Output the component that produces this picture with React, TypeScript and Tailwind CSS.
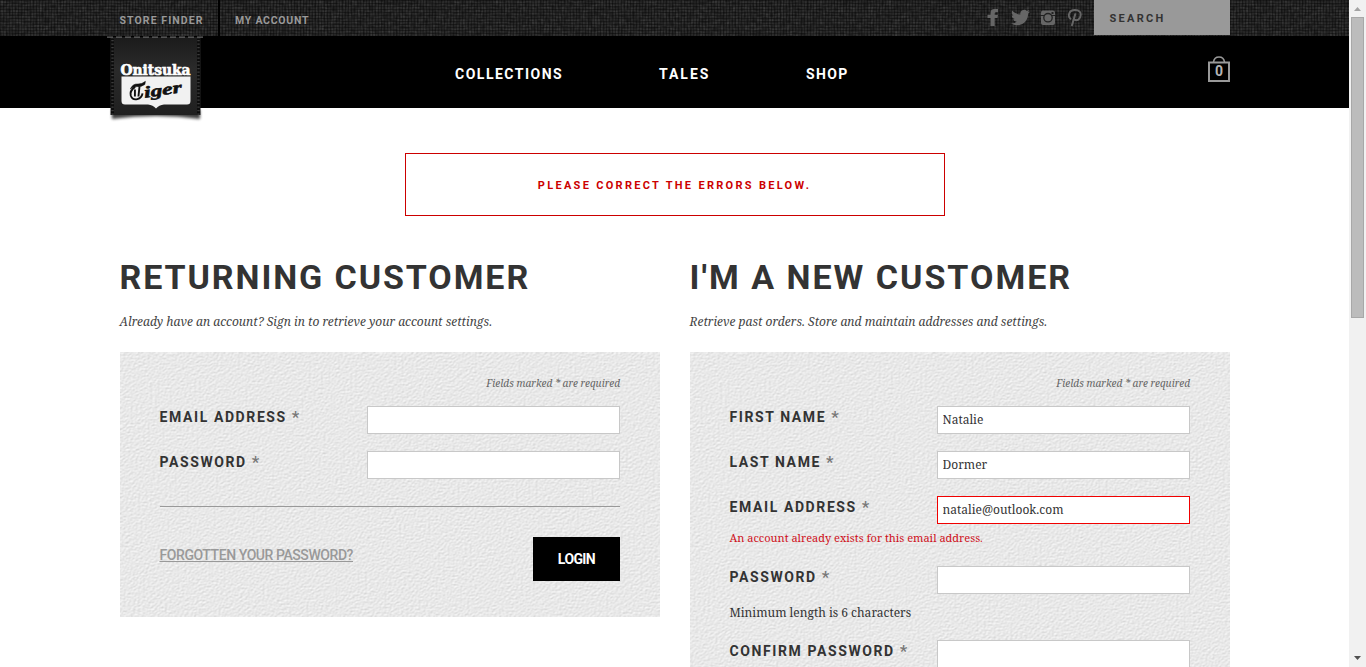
import type { ReactNode } from "react";

function Weave() {
  return (
    <svg className="absolute inset-0 h-full w-full" aria-hidden="true">
      <filter id="warp" x="0" y="0" width="100%" height="100%" colorInterpolationFilters="sRGB">
        <feTurbulence type="fractalNoise" baseFrequency="0.16 0.55" numOctaves="1" seed="3" />
        <feColorMatrix values="0 0 0 0 1  0 0 0 0 1  0 0 0 0 1  0.2 0 0 0 -0.08" />
      </filter>
      <filter id="weft" x="0" y="0" width="100%" height="100%" colorInterpolationFilters="sRGB">
        <feTurbulence type="fractalNoise" baseFrequency="0.55 0.16" numOctaves="1" seed="8" />
        <feColorMatrix values="0 0 0 0 1  0 0 0 0 1  0 0 0 0 1  0.2 0 0 0 -0.08" />
      </filter>
      <pattern id="threads" width="3" height="3" patternUnits="userSpaceOnUse">
        <path d="M0 0.5H3M0.5 0V3" stroke="#000" strokeOpacity="0.3" />
      </pattern>
      <rect width="100%" height="100%" fill="#1f1f1f" />
      <rect width="100%" height="100%" filter="url(#warp)" />
      <rect width="100%" height="100%" filter="url(#weft)" />
      <rect width="100%" height="100%" fill="url(#threads)" />
    </svg>
  );
}

function Paper() {
  return (
    <svg className="absolute inset-0 h-full w-full" aria-hidden="true">
      <filter id="paper" x="0" y="0" width="100%" height="100%" colorInterpolationFilters="sRGB">
        <feTurbulence type="fractalNoise" baseFrequency="0.41 0.57" numOctaves="2" seed="5" />
        <feDiffuseLighting surfaceScale="0.26" diffuseConstant="1.075" lightingColor="#ffffff">
          <feDistantLight azimuth="235" elevation="58" />
        </feDiffuseLighting>
      </filter>
      <rect width="100%" height="100%" fill="#e6e6e6" filter="url(#paper)" />
    </svg>
  );
}

function Logo() {
  return (
    <svg width="100" height="90" viewBox="0 0 100 90" className="block">
      <defs>
        <linearGradient id="patch" x1="0" y1="0" x2="0" y2="1">
          <stop offset="0" stopColor="#1b1b1b" />
          <stop offset="0.4" stopColor="#2a2a2a" />
          <stop offset="1" stopColor="#202020" />
        </linearGradient>
        <filter id="soft" x="-10%" y="-50%" width="120%" height="200%">
          <feGaussianBlur stdDeviation="1.5" />
        </filter>
      </defs>
      <path d="M7 74H95V83Q51 77 7 83Z" fill="#000" opacity="0.75" filter="url(#soft)" />
      <path d="M5.500 1H95.500V79H5.500Z" fill="url(#patch)" />
      <path d="M7.500 3V79M93.500 3V79" stroke="#0c0c0c" strokeWidth="3" />
      <path d="M7.500 4V79M93.500 4V79" stroke="#3c3c3c" strokeWidth="2.400" strokeDasharray="1.300 2.200" />
      <path d="M2 1.200H99" stroke="#666" strokeWidth="1.200" strokeDasharray="6 3" />
      <path
        d="M16.500 40.500H85.500V65Q85.500 68.500 82 68.500H59Q54 69 51 72.500Q48 69 43 68.500H20Q16.500 68.500 16.500 65Z"
        fill="#f1f1f1"
      />
      <text
        x="15.500"
        y="38.700"
        fill="#fff"
        stroke="#fff"
        strokeWidth="0.6"
        textLength="70"
        lengthAdjust="spacingAndGlyphs"
        className="text-[14px] font-bold [font-family:'DejaVu_Serif',serif]"
      >
        Onitsuka
      </text>
      <g transform="rotate(-8 51 56)" fill="#111" stroke="#111">
        <text
          x="39"
          y="60"
          strokeWidth="0.6"
          textLength="38"
          lengthAdjust="spacingAndGlyphs"
          className="text-[16px] font-bold italic [font-family:'Liberation_Serif',serif]"
        >
          iger
        </text>
        <path d="M26 49.500Q29 44.500 34 45.500Q38 46.500 42 44L41 47Q37 49 33 48Q29 47.500 26 49.500Z" strokeWidth="0.500" />
        <path
          d="M31 48Q25 51 25.500 56Q26.500 61 31.500 60.500Q36 60 37.500 55.500M35.500 48L33 58M30.500 50.500L29.500 57.500"
          fill="none"
          strokeWidth="1.900"
        />
      </g>
    </svg>
  );
}

function Social() {
  return (
    <div className="flex h-9 items-start pt-2 text-[#666]">
      <svg width="12" height="19" viewBox="0 0 12 19" fill="currentColor">
        <path d="M3.500 18V10H0.500V6.700H3.500V4.800Q3.500 1 7.500 1H11V4.300H9Q7.700 4.300 7.700 5.500V6.700H11L10.500 10H7.700V18Z" />
      </svg>
      <svg width="19" height="19" viewBox="0 0 24 24" fill="currentColor" className="ml-3">
        <path d="M23.95 4.570a10 10 0 0 1-2.820.770 4.960 4.960 0 0 0 2.160-2.720c-.950.550-2 .960-3.130 1.180a4.920 4.920 0 0 0-8.380 4.480C7.690 8.090 4.070 6.130 1.640 3.160a4.820 4.820 0 0 0-.670 2.480c0 1.710.870 3.210 2.190 4.100a4.900 4.900 0 0 1-2.230-.620v.060a4.920 4.920 0 0 0 3.950 4.830 5 5 0 0 1-2.210.080 4.940 4.940 0 0 0 4.600 3.420A9.870 9.870 0 0 1 0 19.540a14 14 0 0 0 7.550 2.210c9.050 0 14-7.500 14-13.980 0-.210 0-.420-.020-.630a9.940 9.940 0 0 0 2.460-2.550z" />
      </svg>
      <svg width="16" height="19" viewBox="0 0 16 19" className="ml-[10px]">
        <path d="M3 2.500H13Q15 2.500 15 4.500V15Q15 17 13 17H3Q1 17 1 15V4.500Q1 2.500 3 2.500Z" fill="currentColor" />
        <path d="M1 7.500H4.500M11.500 7.500H15" stroke="#222" />
        <circle cx="8" cy="9.700" r="4.200" fill="currentColor" stroke="#222" strokeWidth="1.300" />
        <path d="M11.500 4H13.500V6H11.500Z" fill="#222" />
      </svg>
      <svg width="16" height="19" viewBox="0 0 16 19" fill="none" stroke="currentColor" strokeLinecap="round" className="ml-[11px]">
        <path d="M3.500 10.800C0.600 8.500 1.400 2 8 2C12.500 2 14 4.800 13.700 7.200C13.300 11.500 10 13.200 7.300 11.700" strokeWidth="1.900" />
        <path d="M8.200 6.200L5 17.300" strokeWidth="2" />
      </svg>
    </div>
  );
}

function Bag() {
  return (
    <div className="relative mt-5 h-[27px] w-[22px]">
      <svg width="22" height="27" viewBox="0 0 22 27" fill="none" stroke="#999" className="block">
        <path d="M1 6.500H21V25H1Z" strokeWidth="2" />
        <path d="M5.500 6C6 2.500 8 1 11 1S16 2.500 16.500 6" strokeWidth="1.600" />
      </svg>
      <span className="absolute inset-x-0 top-[8px] text-center text-[14px] leading-[14px] font-bold text-[#b5b5b5]">0</span>
    </div>
  );
}

function Field({ label, value, error, className }: { label: string; value?: string; error?: boolean; className: string }) {
  return (
    <div className={"flex h-7 justify-between " + className}>
      <label className="-ml-[0.5px] text-[14px] leading-[22px] font-bold text-[#333]">
        <span className="tracking-[1.6px]">{label}</span>
        <span className="relative top-px ml-[5px] text-[17px] leading-none font-medium text-[#777]">*</span>
      </label>
      <input
        defaultValue={value}
        className={
          "h-7 w-[253px] border bg-white px-[4.5px] pb-px text-[12px] text-[#333] outline-none [font-family:'Noto_Serif',serif] " +
          (error ? "border-[#f00000]" : "border-[#c8c8c8]")
        }
      />
    </div>
  );
}

function Column({ title, intro, tall, children }: { title: string; intro: string; tall?: boolean; children: ReactNode }) {
  return (
    <section className="w-[540px]">
      <h1
        className={
          "-ml-[0.5px] text-[34px] leading-[34px] font-bold whitespace-nowrap text-[#333] " +
          (tall ? "tracking-[2px]" : "tracking-[1.9px]")
        }
      >
        {title}
      </h1>
      <p className="mt-[19px] -ml-[0.5px] text-[12px] leading-[18px] tracking-[0.01px] text-[#444] italic [font-family:'Noto_Serif',serif]">
        {intro}
      </p>
      <div className={"relative mt-[21px] " + (tall ? "h-[480px]" : "h-[265px]")}>
        <Paper />
        <div className="relative px-10 pt-[23px]">
          <p className="text-right text-[10px] leading-4 tracking-[0.03px] text-[#666] italic [font-family:'Noto_Serif',serif]">
            Fields marked * are required
          </p>
          {children}
        </div>
      </div>
    </section>
  );
}

export default function App() {
  return (
    <div className="flex h-[667px] w-[1366px] overflow-hidden bg-white [font-family:Roboto,sans-serif]">
      <div className="h-full w-[1349px] overflow-hidden">
        <header>
          <div className="relative h-9 overflow-hidden bg-[#222]">
            <Weave />
            <div className="relative ml-[120px] flex h-9 w-[1110px] justify-between">
              <nav className="flex text-[10.5px] leading-[41px] font-bold text-[#999]">
                <a className="-ml-[0.5px] w-[98.5px] tracking-[1.09px]">STORE FINDER</a>
                <a className="border-l-2 border-black pl-[15px] tracking-[0.75px]">MY ACCOUNT</a>
              </nav>
              <div className="flex">
                <Social />
                <div className="ml-[11px] h-[35px] w-[136px] bg-[#999] pl-[15.5px] text-[11px] leading-[37px] font-bold tracking-[2.3px] text-[#333]">
                  SEARCH
                </div>
              </div>
            </div>
          </div>
          <div className="h-[72px] bg-black">
            <div className="relative ml-[105px] flex h-[72px] w-[1125px] items-start justify-between">
              <div className="relative z-10">
                <Logo />
              </div>
              <nav className="absolute top-0 left-[350px] flex text-[14px] leading-[76px] font-bold text-white">
                <a className="w-[204px] tracking-[1.5px]">COLLECTIONS</a>
                <a className="w-[147px] tracking-[2px]">TALES</a>
                <a className="tracking-[1.4px]">SHOP</a>
              </nav>
              <Bag />
            </div>
          </div>
        </header>

        <main className="ml-[120px] w-[1110px] pt-[45px]">
          <div className="mx-auto h-[63px] w-[540px] border border-[#c00] pr-px text-center text-[11px] leading-[63px] font-bold tracking-[2.3px] text-[#c00]">
            PLEASE CORRECT THE ERRORS BELOW.
          </div>

          <div className="mt-11 flex justify-between">
            <Column title="RETURNING CUSTOMER" intro="Already have an account? Sign in to retrieve your account settings.">
              <Field label="EMAIL ADDRESS" className="mt-[15px]" />
              <Field label="PASSWORD" className="mt-[17px]" />
              <div className="mt-[27px] flex items-start justify-between border-t border-[#999] pt-[30px]">
                <a className="-ml-[0.5px] text-[14px] leading-[36px] font-medium tracking-[-0.43px] text-[#999] underline">
                  FORGOTTEN YOUR PASSWORD?
                </a>
                <button className="h-11 w-[87px] bg-black text-[14px] font-bold tracking-[-0.6px] text-white">LOGIN</button>
              </div>
            </Column>

            <Column title="I'M A NEW CUSTOMER" intro="Retrieve past orders. Store and maintain addresses and settings." tall>
              <Field label="FIRST NAME" value="Natalie" className="mt-[15px]" />
              <Field label="LAST NAME" value="Dormer" className="mt-[17px]" />
              <Field label="EMAIL ADDRESS" value="natalie@outlook.com" error className="mt-[17px]" />
              <p className="mt-[6px] -ml-[0.5px] text-[11px] leading-4 text-[#cf1020] [font-family:'Noto_Serif',serif]">
                An account already exists for this email address.
              </p>
              <Field label="PASSWORD" className="mt-5" />
              <p className="mt-[10px] -ml-[0.5px] text-[12px] leading-[18px] text-[#333] [font-family:'Noto_Serif',serif]">
                Minimum length is 6 characters
              </p>
              <Field label="CONFIRM PASSWORD" className="mt-[18px]" />
            </Column>
          </div>
        </main>
      </div>

      <div className="flex h-full w-[17px] flex-col items-center bg-[#f1f1f1]">
        <svg width="7" height="4" viewBox="0 0 7 4" className="mt-[7px] shrink-0" fill="#a3a3a3">
          <path d="M0 4L3.500 0L7 4Z" />
        </svg>
        <div className="mt-[6px] h-[301px] w-[13px] shrink-0 border border-[#a8a8a8] bg-[#bcbcbc]" />
        <svg width="7" height="4" viewBox="0 0 7 4" className="mt-auto mb-[7px] shrink-0" fill="#505050">
          <path d="M0 0H7L3.500 4Z" />
        </svg>
      </div>
    </div>
  );
}
